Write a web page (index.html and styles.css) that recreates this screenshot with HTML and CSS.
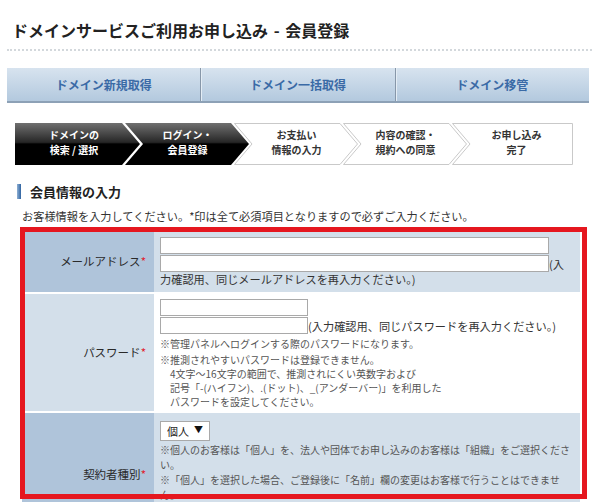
FILE: index.html
```html
<!DOCTYPE html>
<html lang="ja">
<head>
<meta charset="utf-8">
<title>ドメインサービスご利用お申し込み - 会員登録</title>
<link rel="stylesheet" href="styles.css">
</head>
<body>
<h1 class="title">ドメインサービスご利用お申し込み - 会員登録</h1>

<nav class="nav">
  <a class="nav-tab">ドメイン新規取得</a>
  <a class="nav-tab">ドメイン一括取得</a>
  <a class="nav-tab">ドメイン移管</a>
</nav>

<div class="steps">
  <svg class="steps-bg" width="558" height="42" viewBox="0 0 558 42">
    <defs>
      <linearGradient id="blk" x1="0" y1="0" x2="0" y2="1">
        <stop offset="0" stop-color="#707070"/>
        <stop offset="0.46" stop-color="#262626"/>
        <stop offset="0.5" stop-color="#000"/>
        <stop offset="1" stop-color="#000"/>
      </linearGradient>
    </defs>
    <polygon points="0,0 107,0 125,21 107,42 0,42" fill="url(#blk)"/>
    <polygon points="110,0 216,0 234,21 216,42 110,42 128,21" fill="url(#blk)"/>
    <polygon points="219.5,0.5 325,0.5 342.5,21 325,41.5 219.5,41.5 237,21" fill="#fff" stroke="#c9c9c9"/>
    <polygon points="328.5,0.5 434,0.5 451.5,21 434,41.5 328.5,41.5 346,21" fill="#fff" stroke="#c9c9c9"/>
    <polygon points="437.5,0.5 557.5,0.5 557.5,41.5 437.5,41.5 455,21" fill="#fff" stroke="#c9c9c9"/>
  </svg>
  <div class="step step-first step-done">ドメインの<br>検索 / 選択</div>
  <div class="step step-done">ログイン・<br>会員登録</div>
  <div class="step">お支払い<br>情報の入力</div>
  <div class="step">内容の確認・<br>規約への同意</div>
  <div class="step step-last">お申し込み<br>完了</div>
</div>

<h2 class="section-head"><span class="section-bar"></span>会員情報の入力</h2>
<p class="desc">お客様情報を入力してください。*印は全て必須項目となりますので必ずご入力ください。</p>

<div class="form-wrap">
  <table class="form-table">
    <tr class="row-dark">
      <th>メールアドレス<span class="req">*</span></th>
      <td>
        <input class="input input-wide input-first" type="text">
        <input class="input input-wide input-second" type="text">(入力確認用、同じメールアドレスを再入力ください。)
      </td>
    </tr>
    <tr class="row-light">
      <th>パスワード<span class="req">*</span></th>
      <td class="cell-pass">
        <input class="input input-short input-first" type="password">
        <input class="input input-short input-second" type="password">(入力確認用、同じパスワードを再入力ください。)
        <p class="note note-a">※管理パネルへログインする際のパスワードになります。</p>
        <p class="note note-b">※推測されやすいパスワードは登録できません。</p>
        <p class="note note-indent">4文字～16文字の範囲で、推測されにくい英数字および<br>記号「-(ハイフン)、.(ドット)、_(アンダーバー)」を利用した<br>パスワードを設定してください。</p>
      </td>
    </tr>
    <tr class="row-dark">
      <th>契約者種別<span class="req">*</span></th>
      <td class="cell-type">
        <div class="select-line"><span class="select-wrap"><select class="select"><option>個人</option><option>組織</option></select></span></div>
        <p class="note note-type">※個人のお客様は「個人」を、法人や団体でお申し込みのお客様は「組織」をご選択ください。</p>
        <p class="note note-type">※「個人」を選択した場合、ご登録後に「名前」欄の変更はお客様で行うことはできません。</p>
        <p class="note note-type">※「組織」を選択した場合、ご登録後に「組織名」欄の変更はお客様で行うことはできません。</p>
      </td>
    </tr>
  </table>
  <div class="highlight"></div>
</div>
</body>
</html>
```
FILE: styles.css
```css
* { box-sizing: border-box; }

body {
  margin: 0;
  font-family: "Noto Sans CJK JP", "Noto Sans", sans-serif;
  color: #333;
  background: #fff;
}

.title {
  margin: 0 0 0 7px;
  width: 585px;
  padding: 20px 0 9px 5px;
  border-bottom: 2px dotted #d3d8dc;
  font-size: 16px;
  line-height: 20px;
  font-weight: bold;
  color: #222;
  word-spacing: 2px;
}

.nav {
  display: flex;
  margin: 17px 0 0 7px;
  width: 582px;
  height: 35px;
  border-bottom: 2px solid #8da1b6;
}

.nav-tab {
  flex: 1;
  text-align: center;
  font-size: 12px;
  line-height: 33px;
  font-weight: bold;
  color: #3a6aa6;
  background: linear-gradient(#d7e3ef, #b3c9de);
  text-decoration: none;
}

.nav-tab + .nav-tab {
  border-left: 1px solid #8797a9;
  box-shadow: inset 1px 0 0 #e4edf5;
}

.steps {
  position: relative;
  display: flex;
  margin: 20px 0 0 15px;
  width: 558px;
  height: 42px;
}

.steps-bg {
  position: absolute;
  left: 0;
  top: 0;
}

.step {
  position: relative;
  width: 109px;
  display: flex;
  align-items: center;
  justify-content: center;
  padding-bottom: 3px;
  text-align: center;
  font-size: 10px;
  line-height: 14.5px;
  font-weight: bold;
  color: #333;
}

.step-first { width: 118px; }
.step-last { flex: 1; }
.step-done { color: #fff; }

.section-head {
  display: flex;
  align-items: center;
  gap: 9px;
  margin: 19px 0 0 17px;
  font-size: 13px;
  line-height: 15px;
  font-weight: bold;
  color: #222;
}

.section-bar {
  width: 4px;
  height: 15px;
  background: linear-gradient(to right, #8fb0d4, #2f63a1);
}

.desc {
  margin: 10px 0 0 22px;
  font-size: 11.2px;
  line-height: 14px;
  color: #333;
}

.form-wrap {
  position: relative;
  margin: 8px 0 0 22px;
  width: 558px;
}

.form-table {
  width: 558px;
  border-collapse: collapse;
  font-size: 11.2px;
  line-height: 15px;
}

.form-table th {
  width: 132px;
  padding: 0 8px 0 0;
  text-align: right;
  vertical-align: middle;
  font-size: 11.5px;
  font-weight: normal;
  color: #2a2a2a;
}

.form-table td {
  padding: 6px 8px 5px 6px;
  vertical-align: top;
}

.row-dark th { background: #afc4da; }
.row-dark td { background: #d3dfea; }
.row-light th { background: #d3dfea; }
.row-light td { background: #fff; }

.row-light, .row-light + .row-dark { border-top: 2px solid #fff; }

.req {
  color: #e0202a;
}

.input {
  height: 17px;
  margin: 0;
  padding: 0 2px;
  border: 1px solid #a9a9a9;
  background: #fff;
  font: inherit;
}

.input-first { display: block; }
.input-second {
  display: inline-block;
  margin-top: 1px;
  vertical-align: bottom;
}

.input-wide { width: 389px; }
.input-short { width: 148px; }

.cell-pass { padding-top: 5px !important; padding-bottom: 2px !important; }

.note {
  margin: 0;
  font-size: 10px;
  line-height: 14px;
  color: #555;
}

.note-a { margin-top: 3px; }
.note-b { margin-top: 2px; }
.note-indent { padding-left: 10px; }

.cell-type { padding-top: 8px !important; padding-bottom: 3px !important; }

.select-line {
  height: 20px;
  margin-bottom: 1px;
}

.select-wrap {
  position: relative;
  display: inline-block;
  vertical-align: top;
}

.select {
  appearance: none;
  -webkit-appearance: none;
  width: 50px;
  height: 20px;
  margin: 0;
  padding: 0 0 0 6px;
  border: 1px solid #a9a9a9;
  border-radius: 0;
  background: #fff;
  font-family: inherit;
  font-size: 11px;
  color: #222;
}

.select-wrap::after {
  content: "▼";
  position: absolute;
  right: 7px;
  top: 3px;
  font-size: 9px;
  line-height: 12px;
  color: #111;
  pointer-events: none;
}

.note-type {
  line-height: 15px;
}

.highlight {
  position: absolute;
  left: -2px;
  top: -4px;
  width: 567px;
  height: 272px;
  border: 5px solid #e5171f;
  pointer-events: none;
}
```
